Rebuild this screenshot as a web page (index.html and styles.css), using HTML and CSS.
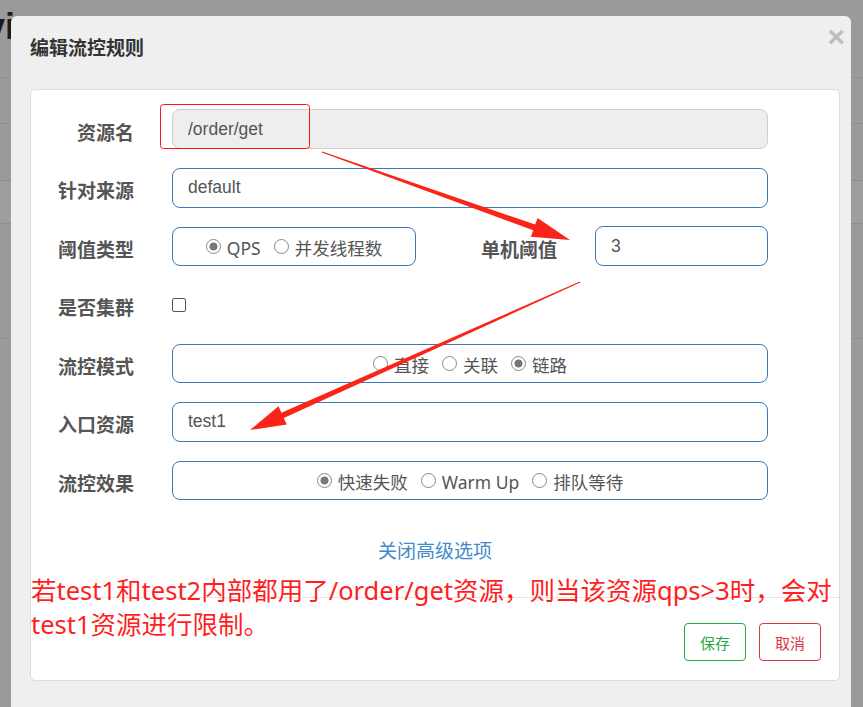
FILE: index.html
```html
<!DOCTYPE html>
<html lang="zh-CN">
  <head>
    <meta charset="UTF-8" />
    <title>编辑流控规则</title>
    <link rel="stylesheet" href="styles.css">
  </head>
  <body>
    <div class="page">
      <div class="page-head"><span class="page-title">vi</span></div>
      <div class="page-row row-a"></div>
      <div class="page-row row-b"></div>
      <div class="page-row row-c"></div>
      <div class="page-row row-d"></div>
    </div>

    <div class="modal">
      <div class="modal-header">
        <h4 class="modal-title">编辑流控规则</h4>
        <span class="close">×</span>
      </div>

      <div class="panel">
        <form class="rule-form">
          <div class="form-row">
            <label class="label">资源名</label>
            <input class="field field-readonly" value="/order/get" readonly>
          </div>

          <div class="form-row">
            <label class="label">针对来源</label>
            <input class="field" value="default">
          </div>

          <div class="form-row">
            <label class="label">阈值类型</label>
            <div class="radio-box radio-box-short">
              <label class="choice"><input type="radio" name="grade" checked>QPS</label>
              <label class="choice"><input type="radio" name="grade">并发线程数</label>
            </div>
            <label class="label label-inline">单机阈值</label>
            <input class="field field-short" value="3">
          </div>

          <div class="form-row">
            <label class="label">是否集群</label>
            <input class="check" type="checkbox">
          </div>

          <div class="form-row">
            <label class="label">流控模式</label>
            <div class="radio-box">
              <label class="choice"><input type="radio" name="strategy">直接</label>
              <label class="choice"><input type="radio" name="strategy">关联</label>
              <label class="choice"><input type="radio" name="strategy" checked>链路</label>
            </div>
          </div>

          <div class="form-row">
            <label class="label">入口资源</label>
            <input class="field" value="test1">
          </div>

          <div class="form-row">
            <label class="label">流控效果</label>
            <div class="radio-box">
              <label class="choice"><input type="radio" name="behavior" checked>快速失败</label>
              <label class="choice"><input type="radio" name="behavior">Warm Up</label>
              <label class="choice"><input type="radio" name="behavior">排队等待</label>
            </div>
          </div>
        </form>

        <div class="toggle"><a class="toggle-link">关闭高级选项</a></div>

        <div class="panel-footer">
          <button class="btn btn-save">保存</button>
          <button class="btn btn-cancel">取消</button>
        </div>
      </div>
    </div>

    <!-- annotations drawn on top of the dialog -->
    <p class="note">若test1和test2内部都用了/order/get资源，则当该资源qps&gt;3时，会对<br>test1资源进行限制。</p>

    <svg class="marks" width="863" height="707" viewBox="0 0 863 707">
      <rect x="160.5" y="104.5" width="149" height="44" rx="3" fill="none" stroke="#ff1414" stroke-width="1"/>
      <polygon fill="#fb2418" points="322.2,151.4 535.2,224.6 537.6,218 570,240 530.9,236.8 533.2,230.2 321.8,152.6"/>
      <polygon fill="#fb2418" points="579.75,281.45 281.4,412.7 278.5,406.3 250,430 286.7,424.5 283.8,418.1 580.25,282.55"/>
    </svg>
  </body>
</html>
```

FILE: styles.css
```css
* {
  box-sizing: border-box;
}

body {
  margin: 0;
  position: relative;
  width: 863px;
  height: 707px;
  overflow: hidden;
  background: #9a9a9a;
  font-family: "Noto Sans", "Noto Sans CJK SC", sans-serif;
}

/* page behind the backdrop */
.page-head {
  height: 78px;
  padding-top: 9px;
  border-bottom: 1px solid #8e8e8e;
}

.page-title {
  display: inline-block;
  margin-left: -15px;
  font-family: "Liberation Sans", sans-serif;
  font-size: 36px;
  line-height: 36px;
  font-weight: bold;
  color: #1c1c1c;
}

.page-row {
  border-bottom: 1px solid #8e8e8e;
}

.row-a {
  height: 46px;
}

.row-b {
  height: 57px;
}

.row-c {
  height: 43px;
  background: #9e9e9e;
}

.row-d {
  height: 115px;
}

/* dialog */
.modal {
  position: absolute;
  left: 11px;
  top: 16px;
  width: 840px;
  height: 720px;
  background: #efefef;
  border-radius: 6px 6px 0 0;
}

.modal-header {
  display: flex;
  justify-content: space-between;
  align-items: flex-start;
  height: 73px;
  padding: 18px 6px 0 19px;
}

.modal-title {
  margin: 0;
  font-family: "Noto Sans CJK SC", sans-serif;
  font-size: 19px;
  line-height: 26px;
  font-weight: bold;
  color: #333;
}

.close {
  margin-top: -12px;
  font-family: "Liberation Sans", sans-serif;
  font-size: 30px;
  line-height: 30px;
  font-weight: bold;
  color: #bdbdbd;
}

.panel {
  margin-left: 19px;
  width: 810px;
  height: 592px;
  padding-top: 19px;
  background: #fff;
  border: 1px solid #dcdcdc;
  border-radius: 5px;
}

.rule-form {
  display: flex;
  flex-direction: column;
  gap: 18.5px;
}

.form-row {
  display: flex;
  align-items: center;
  height: 40px;
}

.label {
  flex-shrink: 0;
  width: 103px;
  padding-top: 4px;
  text-align: right;
  font-family: "Noto Sans CJK SC", sans-serif;
  font-size: 19px;
  font-weight: bold;
  color: #555;
}

.label-inline {
  width: 141px;
}

.field {
  margin-left: 38px;
  width: 596px;
  height: 40px;
  padding: 0 15px;
  border: 1px solid #3a7ab8;
  border-radius: 8px;
  background: #fff;
  font-family: "Liberation Sans", sans-serif;
  font-size: 17.5px;
  color: #555;
  outline: none;
}

.field-readonly {
  background: #eee;
  border-color: #cfcfcf;
}

.field-short {
  width: 173px;
}

.radio-box {
  display: flex;
  justify-content: center;
  align-items: center;
  gap: 13px;
  margin-left: 38px;
  width: 596px;
  height: 39px;
  padding-top: 3px;
  border: 1px solid #3a7ab8;
  border-radius: 8px;
}

.radio-box-short {
  width: 244px;
}

.choice {
  display: inline-flex;
  align-items: center;
  gap: 6px;
  font-size: 17.5px;
  color: #555;
}

.choice input {
  appearance: none;
  -webkit-appearance: none;
  width: 15px;
  height: 15px;
  margin: 0 0 3px;
  border: 1px solid #888;
  border-radius: 50%;
  background: #fff;
}

.choice input:checked {
  background: radial-gradient(circle, #777 0 3.6px, #fff 4.4px);
}

.check {
  appearance: none;
  -webkit-appearance: none;
  margin: 0 0 0 38px;
  width: 14px;
  height: 14px;
  border: 1px solid #555;
  border-radius: 2px;
  background: #fff;
}

.toggle {
  margin-top: 39px;
  text-align: center;
  font-size: 19px;
  line-height: 24px;
}

.toggle-link {
  color: #428bca;
  text-decoration: none;
}

.panel-footer {
  display: flex;
  justify-content: flex-end;
  gap: 13px;
  margin-top: 34px;
  padding: 25px 18px 0 0;
  border-top: 1px solid #e5e5e5;
}

.btn {
  width: 62px;
  height: 38px;
  padding: 0;
  background: #fff;
  border: 1px solid;
  border-radius: 4px;
  font-family: "Noto Sans CJK SC", sans-serif;
  font-size: 15px;
}

.btn-save {
  color: #28a745;
  border-color: #28a745;
}

.btn-cancel {
  color: #dc3545;
  border-color: #dc3545;
}

/* annotations */
.note {
  position: absolute;
  left: 31px;
  top: 573px;
  margin: 0;
  font-size: 25.5px;
  line-height: 34px;
  color: #ff1f1f;
  white-space: nowrap;
}

.marks {
  position: absolute;
  left: 0;
  top: 0;
  pointer-events: none;
}
```
